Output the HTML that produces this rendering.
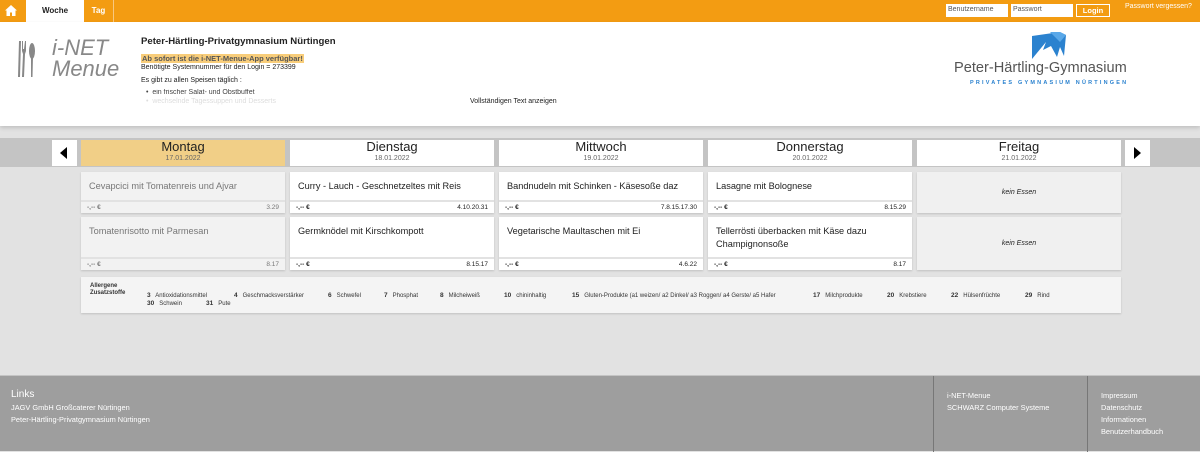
<!DOCTYPE html>
<html><head><meta charset="utf-8"><style>
*{box-sizing:border-box;margin:0;padding:0}
body{width:1200px;height:451px;overflow:hidden;background:#e2e2e2;font-family:"Liberation Sans",sans-serif;position:relative;color:#222}
.abs{position:absolute}
.top{left:0;top:0;width:1200px;height:22px;background:#f39c12}
.hdr{left:0;top:22px;width:1200px;height:104px;background:#fff;box-shadow:0 2px 4px rgba(0,0,0,.15)}
.strip{left:0;top:138px;width:1200px;height:29px;background:#c4c4c4}
.day{top:140px;height:26px;width:204px;background:#fff;text-align:center}
.day b{display:block;font-weight:normal;font-size:13px;line-height:14px;color:#222}
.day i{display:block;font-style:normal;font-size:7px;color:#666;line-height:9px}
.card{width:204px;background:#fff;box-shadow:0 1px 2px rgba(0,0,0,.15)}
.card .t{font-size:9.2px;padding:8px 0 0 8px;line-height:13px;color:#222}
.card .p{position:absolute;left:0;bottom:0;width:100%;height:13px;border-top:2px solid #e2e2e2;font-size:6.5px;padding:2px 6px 0 6px;font-weight:bold}
.card .p span{float:right;font-weight:normal}
.grey{background:#f2f2f2}.grey .t{color:#777}.grey .p{color:#777}
.no{background:#f0f0f0;font-size:7px;font-style:italic;text-align:center}
.ft{left:0;top:375px;width:1200px;height:76px;background:#9e9e9e;border-top:1px solid #c4c4c4;color:#fff;font-size:7.4px}
.ft div{line-height:12px}
.al{font-size:6px;color:#333}
.al b{font-size:6.5px}
</style></head><body>
<div class="abs top"></div>
<div class="abs" style="left:0;top:0;width:22px;height:22px;text-align:center">
<svg width="12" height="11" viewBox="0 0 12 11" style="margin-top:5px"><path d="M6 0L0 5.5h1.5V11h3.5V7.5h2V11h3.5V5.5H12z" fill="#fff"/></svg></div>
<div class="abs" style="left:26px;top:0;width:58px;height:22px;background:#fff;font-size:8px;font-weight:bold;text-align:center;line-height:22px">Woche</div>
<div class="abs" style="left:84px;top:0;width:29px;height:22px;color:#fff;font-size:8px;font-weight:bold;text-align:center;line-height:22px">Tag</div>
<div class="abs" style="left:113px;top:0;width:1px;height:22px;background:#f8c880"></div>
<div class="abs" style="left:946px;top:4px;width:62px;height:13px;background:#fff;font-size:7px;color:#555;padding:2px 2px">Benutzername</div>
<div class="abs" style="left:1011px;top:4px;width:62px;height:13px;background:#fff;font-size:7px;color:#555;padding:2px 2px">Passwort</div>
<div class="abs" style="left:1076px;top:4px;width:34px;height:13px;border:1px solid #fff;color:#fff;font-size:7.5px;font-weight:bold;text-align:center;line-height:11px">Login</div>
<div class="abs" style="left:1125px;top:3px;color:#fff;font-size:7px">Passwort vergessen?</div>

<div class="abs hdr"></div>
<svg class="abs" style="left:16px;top:39px" width="32" height="40" viewBox="0 0 32 40"><g fill="#888"><path d="M3 2h2l-1 36h-2z"/><path d="M9 2h1v10l-1 3 -1 23h-2l1-23-1-3V2h1v8h1z"/><ellipse cx="16" cy="12" rx="3" ry="8"/><path d="M15 18h2l-0.5 20h-1.5z"/></g></svg>
<div class="abs" style="left:52px;top:37px;font-size:22px;font-style:italic;color:#888;line-height:21px">i-NET<br>Menue</div>
<div class="abs" style="left:141px;top:36px;font-size:9.6px;font-weight:bold">Peter-Härtling-Privatgymnasium Nürtingen</div>
<div class="abs" style="left:141px;top:54px;font-size:7.5px;font-weight:bold;background:#f8cd7a;color:#555;padding:0 1px">Ab sofort ist die i-NET-Menue-App verfügbar!</div>
<div class="abs" style="left:141px;top:64px;font-size:7px">Benötigte Systemnummer für den Login = 273399</div>
<div class="abs" style="left:141px;top:77px;font-size:7px">Es gibt zu allen Speisen täglich :</div>
<div class="abs" style="left:146px;top:89px;font-size:7px;color:#444;height:6px;overflow:hidden">•&nbsp;&nbsp;ein frischer Salat- und Obstbuffet</div>
<div class="abs" style="left:146px;top:98px;font-size:7px;color:#ddd">•&nbsp;&nbsp;wechselnde Tagessuppen und Desserts</div>
<div class="abs" style="left:470px;top:98px;font-size:7px">Vollständigen Text anzeigen</div>
<svg class="abs" style="left:1018px;top:30px" width="54" height="32" viewBox="0 0 54 32"><path d="M14 6l28-4 6 3-2 21-4-9-3 10-6-11-8 4 3-8-14 17z" fill="#2b82cf"/><path d="M32 2l10 0 6 3-6 7z" fill="#5aa8e8"/></svg>
<div class="abs" style="left:954px;top:60px;font-size:14.6px;color:#555">Peter-Härtling-Gymnasium</div>
<div class="abs" style="left:970px;top:80px;font-size:5.5px;color:#2b82cf;letter-spacing:2.2px;font-weight:bold">PRIVATES GYMNASIUM NÜRTINGEN</div>

<div class="abs strip"></div>
<div class="abs" style="left:52px;top:140px;width:25px;height:26px;background:#fff"><svg width="25" height="26"><path d="M15 7v12l-7-6z" fill="#000"/></svg></div>
<div class="abs" style="left:1125px;top:140px;width:25px;height:26px;background:#fff"><svg width="25" height="26"><path d="M9 7v12l7-6z" fill="#000"/></svg></div>
<div class="abs day" style="left:81px;background:#f1cf87"><b>Montag</b><i>17.01.2022</i></div>
<div class="abs day" style="left:290px"><b>Dienstag</b><i>18.01.2022</i></div>
<div class="abs day" style="left:499px"><b>Mittwoch</b><i>19.01.2022</i></div>
<div class="abs day" style="left:708px"><b>Donnerstag</b><i>20.01.2022</i></div>
<div class="abs day" style="left:917px"><b>Freitag</b><i>21.01.2022</i></div>

<div class="abs card grey" style="left:81px;top:172px;height:41px"><div class="t">Cevapcici mit Tomatenreis und Ajvar</div><div class="p">-,-- €<span>3.29</span></div></div>
<div class="abs card" style="left:290px;top:172px;height:41px"><div class="t">Curry - Lauch - Geschnetzeltes mit Reis</div><div class="p">-,-- €<span>4.10.20.31</span></div></div>
<div class="abs card" style="left:499px;top:172px;height:41px"><div class="t">Bandnudeln mit Schinken - Käsesoße daz</div><div class="p">-,-- €<span>7.8.15.17.30</span></div></div>
<div class="abs card" style="left:708px;top:172px;height:41px"><div class="t">Lasagne mit Bolognese</div><div class="p">-,-- €<span>8.15.29</span></div></div>
<div class="abs card no" style="left:917px;top:172px;height:41px;line-height:41px">kein Essen</div>

<div class="abs card grey" style="left:81px;top:217px;height:53px"><div class="t">Tomatenrisotto mit Parmesan</div><div class="p">-,-- €<span>8.17</span></div></div>
<div class="abs card" style="left:290px;top:217px;height:53px"><div class="t">Germknödel mit Kirschkompott</div><div class="p">-,-- €<span>8.15.17</span></div></div>
<div class="abs card" style="left:499px;top:217px;height:53px"><div class="t">Vegetarische Maultaschen mit Ei</div><div class="p">-,-- €<span>4.6.22</span></div></div>
<div class="abs card" style="left:708px;top:217px;height:53px"><div class="t">Tellerrösti überbacken mit Käse dazu Champignonsoße</div><div class="p">-,-- €<span>8.17</span></div></div>
<div class="abs card no" style="left:917px;top:217px;height:53px;line-height:53px">kein Essen</div>

<div class="abs" style="left:81px;top:277px;width:1040px;height:36px;background:#f4f4f4;box-shadow:0 1px 2px rgba(0,0,0,.15)"></div>
<div class="abs al" style="left:90px;top:283px;font-weight:bold;line-height:7px">Allergene<br>Zusatzstoffe</div>
<div class="abs al" style="left:147px;top:292px;white-space:nowrap"><b>3</b>&nbsp;&nbsp; Antioxidationsmittel</div>
<div class="abs al" style="left:234px;top:292px;white-space:nowrap"><b>4</b>&nbsp;&nbsp; Geschmacksverstärker</div>
<div class="abs al" style="left:328px;top:292px"><b>6</b>&nbsp;&nbsp; Schwefel</div>
<div class="abs al" style="left:384px;top:292px"><b>7</b>&nbsp;&nbsp; Phosphat</div>
<div class="abs al" style="left:440px;top:292px"><b>8</b>&nbsp;&nbsp; Milcheiweiß</div>
<div class="abs al" style="left:504px;top:292px"><b>10</b>&nbsp;&nbsp; chininhaltig</div>
<div class="abs al" style="left:572px;top:292px;white-space:nowrap"><b>15</b>&nbsp;&nbsp; Gluten-Produkte (a1 weizen/ a2 Dinkel/ a3 Roggen/ a4 Gerste/ a5 Hafer</div>
<div class="abs al" style="left:813px;top:292px"><b>17</b>&nbsp;&nbsp; Milchprodukte</div>
<div class="abs al" style="left:887px;top:292px"><b>20</b>&nbsp;&nbsp; Krebstiere</div>
<div class="abs al" style="left:951px;top:292px"><b>22</b>&nbsp;&nbsp; Hülsenfrüchte</div>
<div class="abs al" style="left:1025px;top:292px"><b>29</b>&nbsp;&nbsp; Rind</div>
<div class="abs al" style="left:147px;top:300px"><b>30</b>&nbsp;&nbsp; Schwein</div>
<div class="abs al" style="left:206px;top:300px"><b>31</b>&nbsp;&nbsp; Pute</div>

<div class="abs ft">
<div class="abs" style="left:11px;top:13px;font-size:10px">Links</div>
<div class="abs" style="left:11px;top:26px">JAGV GmbH Großcaterer Nürtingen</div>
<div class="abs" style="left:11px;top:38px">Peter-Härtling-Privatgymnasium Nürtingen</div>
<div class="abs" style="left:933px;top:0;width:1px;height:76px;background:#777"></div>
<div class="abs" style="left:1087px;top:0;width:1px;height:76px;background:#777"></div>
<div class="abs" style="left:947px;top:14px">i-NET-Menue<br>SCHWARZ Computer Systeme</div>
<div class="abs" style="left:1101px;top:14px">Impressum<br>Datenschutz<br>Informationen<br>Benutzerhandbuch</div>
</div>
</body></html>
